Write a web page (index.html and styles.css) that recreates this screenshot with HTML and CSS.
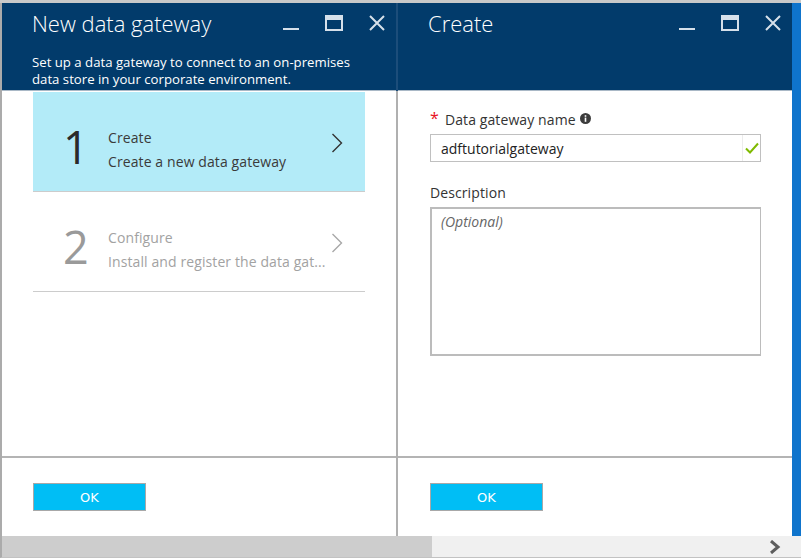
FILE: index.html
```html
<!DOCTYPE html>
<html>
<head>
<meta charset="utf-8">
<link rel="stylesheet" href="styles.css">
</head>
<body>
<div class="app">
  <div class="topstrip"></div>
  <div class="main">
    <div class="edge-left"></div>
    <section class="blade">
      <header class="blade-head">
        <div class="head-row">
          <h1 class="blade-title">New data gateway</h1>
          <div class="win-ctrls">
            <svg class="ic" width="18" height="16" viewBox="0 0 18 16"><rect x="1" y="13" width="16" height="2" fill="#d6e0ea"/></svg>
            <svg class="ic" width="18" height="16" viewBox="0 0 18 16"><rect x="1" y="1" width="16" height="14" fill="none" stroke="#d6e0ea" stroke-width="2"/><rect x="1" y="1" width="16" height="4" fill="#d6e0ea"/></svg>
            <svg class="ic" width="18" height="16" viewBox="0 0 18 16"><path d="M2 1 L16 15 M16 1 L2 15" stroke="#d6e0ea" stroke-width="2"/></svg>
          </div>
        </div>
        <p class="blade-sub">Set up a data gateway to connect to an on-premises data store in your corporate environment.</p>
      </header>
      <div class="blade-body">
        <div class="steps">
          <div class="step active">
            <div class="step-num">1</div>
            <div class="step-text">
              <div class="step-title">Create</div>
              <div class="step-desc">Create a new data gateway</div>
            </div>
            <svg class="chev" width="12" height="20" viewBox="0 0 12 20"><path d="M1.5 1 L10.5 10 L1.5 19" fill="none" stroke="#333" stroke-width="1.4"/></svg>
          </div>
          <div class="step">
            <div class="step-num">2</div>
            <div class="step-text">
              <div class="step-title">Configure</div>
              <div class="step-desc">Install and register the data gat...</div>
            </div>
            <svg class="chev" width="12" height="20" viewBox="0 0 12 20"><path d="M1.5 1 L10.5 10 L1.5 19" fill="none" stroke="#a8a8a8" stroke-width="1.4"/></svg>
          </div>
        </div>
      </div>
      <footer class="blade-foot">
        <button class="btn-ok">OK</button>
      </footer>
    </section>
    <div class="divider"></div>
    <section class="blade">
      <header class="blade-head">
        <div class="head-row">
          <h1 class="blade-title">Create</h1>
          <div class="win-ctrls">
            <svg class="ic" width="18" height="16" viewBox="0 0 18 16"><rect x="1" y="13" width="16" height="2" fill="#d6e0ea"/></svg>
            <svg class="ic" width="18" height="16" viewBox="0 0 18 16"><rect x="1" y="1" width="16" height="14" fill="none" stroke="#d6e0ea" stroke-width="2"/><rect x="1" y="1" width="16" height="4" fill="#d6e0ea"/></svg>
            <svg class="ic" width="18" height="16" viewBox="0 0 18 16"><path d="M2 1 L16 15 M16 1 L2 15" stroke="#d6e0ea" stroke-width="2"/></svg>
          </div>
        </div>
      </header>
      <div class="blade-body form">
        <div class="field-label"><span class="req">*</span><span class="lbl-text">Data gateway name</span><svg class="info" width="11" height="11" viewBox="0 0 11 11"><circle cx="5.5" cy="5.5" r="5.5" fill="#3c3c3c"/><rect x="4.7" y="4.6" width="1.6" height="4.2" fill="#fff"/><rect x="4.7" y="2.2" width="1.6" height="1.6" fill="#fff"/></svg></div>
        <div class="input">
          <span class="input-val">adftutorialgateway</span>
          <span class="input-ok">
            <svg width="14" height="12" viewBox="0 0 14 12"><path d="M1 6.5 L5 10.5 L13 1.5" fill="none" stroke="#7fba00" stroke-width="2"/></svg>
          </span>
        </div>
        <div class="field-label desc">Description</div>
        <div class="textarea"><span class="placeholder">(Optional)</span></div>
      </div>
      <footer class="blade-foot">
        <button class="btn-ok">OK</button>
      </footer>
    </section>
    <div class="edge-right"></div>
  </div>
  <div class="hscroll">
    <div class="thumb"></div>
    <svg class="sc-arrow" width="12" height="14" viewBox="0 0 12 14"><path d="M2 1 L9 7 L2 13" fill="none" stroke="#5d5d5d" stroke-width="3"/></svg>
  </div>
</div>
</body>
</html>
```

FILE: styles.css
```css
* { box-sizing: border-box; }
html, body { margin: 0; padding: 0; }
body {
  width: 801px;
  height: 558px;
  overflow: hidden;
  font-family: "Open Sans", "Noto Sans", sans-serif;
  background: #fff;
}
.app {
  width: 801px;
  height: 558px;
  display: flex;
  flex-direction: column;
}
.topstrip {
  height: 3px;
  background: #c9c9c9;
  flex: none;
}
.main {
  flex: 1;
  display: flex;
  min-height: 0;
}
.edge-left {
  width: 2px;
  background: #ababab;
  flex: none;
}
.divider {
  width: 2px;
  flex: none;
  background: linear-gradient(#1c4d7a 0 88px, #b0b0b0 88px);
}
.edge-right {
  width: 9px;
  flex: none;
  background: #0f74cc;
}
.blade {
  width: 394px;
  flex: none;
  display: flex;
  flex-direction: column;
  background: #fff;
}
.blade-head {
  height: 88px;
  flex: none;
  background: #023b6b;
  color: #fff;
  padding: 0 10px 0 30px;
  border-bottom: 1px solid #a9b8c6;
}
.head-row {
  display: flex;
  align-items: center;
  height: 40px;
}
.blade-title {
  margin: 0;
  flex: 1;
  font-size: 22px;
  font-weight: 300;
  color: #fff;
  line-height: 40px;
}
.win-ctrls {
  display: flex;
  gap: 25px;
  align-items: center;
  margin-top: -1px;
}
.ic { display: block; }
.blade-sub {
  margin: 11px 0 0;
  font-size: 13.2px;
  line-height: 17px;
  color: #fff;
  padding-right: 30px;
}
.blade-body {
  flex: 1;
  min-height: 0;
}
.steps {
  padding: 1px 31px 0;
}
.step {
  height: 100px;
  display: flex;
  align-items: center;
  border-bottom: 1px solid #cccccc;
  padding: 0 22px 0 30px;
}
.step.active { background: #b3ebf8; }
.step-num {
  width: 45px;
  font-size: 45px;
  font-weight: 500;
  line-height: 1;
  color: #2a2a2a;
  margin-top: 9px;
}
.step:not(.active) .step-num { color: #9a9a9a; }
.step-text {
  flex: 1;
  font-size: 14px;
  line-height: 24px;
  color: #3a3a3a;
  letter-spacing: 0.1px;
  white-space: nowrap;
  margin-top: 17px;
}
.step:not(.active) .step-text { color: #a2a2a2; }
.chev { display: block; margin-top: 2px; }
.blade-foot {
  height: 80px;
  flex: none;
  border-top: 2px solid #b4b4b4;
  padding: 25px 0 0 31px;
}
.blade + .divider + .blade .blade-foot { padding-left: 32px; }
.btn-ok {
  width: 113px;
  height: 28px;
  background: #00bef5;
  border: 1px solid #a8a8a8;
  color: #fff;
  font-family: "DejaVu Sans", sans-serif;
  font-size: 13px;
  padding: 0;
  display: block;
}
.form {
  padding: 18px 31px 0 32px;
  display: flex;
  flex-direction: column;
}
.field-label {
  display: flex;
  align-items: center;
  font-size: 14px;
  color: #333;
  letter-spacing: 0.1px;
  height: 20px;
}
.req {
  color: #e81123;
  font-size: 16px;
  margin-right: 6px;
  margin-top: -2px;
}
.info { margin-left: 4px; margin-top: -2px; }
.input {
  margin-top: 5px;
  height: 28px;
  border: 1px solid #c0c0c0;
  display: flex;
  align-items: center;
  padding-left: 10px;
}
.input-val {
  flex: 1;
  font-size: 14px;
  color: #222;
}
.input-ok {
  width: 18px;
  height: 26px;
  border-left: 1px solid #ececec;
  display: flex;
  align-items: center;
  justify-content: center;
}
.desc { margin-top: 20px; }
.textarea {
  margin-top: 5px;
  height: 149px;
  border: 2px solid #bcbcbc;
  border-right-width: 1px;
  padding: 1px 9px;
}
.placeholder {
  font-size: 14px;
  font-style: italic;
  color: #666;
}
.hscroll {
  height: 22px;
  flex: none;
  background: #f0f0f0;
  border-left: 2px solid #ababab;
  border-bottom: 1px solid #c2c2c2;
  display: flex;
  align-items: center;
}
.thumb {
  width: 430px;
  height: 100%;
  background: #cdcdcd;
}
.sc-arrow { margin-left: auto; margin-right: 20px; }
```
